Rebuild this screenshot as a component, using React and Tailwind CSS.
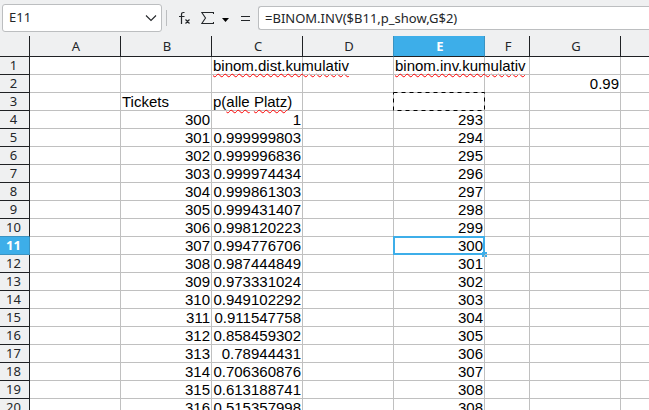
const columns = ['A', 'B', 'C', 'D', 'E', 'F', 'G'];
const ACTIVE_COL = 'E';
const ACTIVE_ROW = 11;

const probabilities = [
    '1', '0.999999803', '0.999996836', '0.999974434', '0.999861303', '0.999431407',
    '0.998120223', '0.994776706', '0.987444849', '0.973331024', '0.949102292', '0.911547758',
    '0.858459302', '0.78944431', '0.706360876', '0.613188741', '0.515357998',
];

const inverse = [293, 294, 295, 296, 297, 298, 299, 300, 301, 302, 303, 304, 305, 306, 307, 308, 308];

const Misspelled = ({ children }) => (
    <span className="underline decoration-[#f00] decoration-wavy decoration-1 underline-offset-2 [text-decoration-skip-ink:none]">{children}</span>
);

const cells = {
    C1: { text: <Misspelled>binom.dist.kumulativ</Misspelled> },
    E1: { text: <Misspelled>binom.inv.kumulativ</Misspelled> },
    G2: { text: '0.99', number: true },
    B3: { text: 'Tickets' },
    C3: { text: <>p(<Misspelled>alle</Misspelled> <Misspelled>Platz</Misspelled>)</> },
};

probabilities.forEach((p, i) => {
    cells[`B${i + 4}`] = { text: 300 + i, number: true };
    cells[`C${i + 4}`] = { text: p, number: true };
    cells[`E${i + 4}`] = { text: inverse[i], number: true };
});

function Toolbar() {
    return (
        <div className="flex h-9 shrink-0 items-center pl-[2px]">
            <div className="flex h-7 w-40 shrink-0 items-center rounded-[3px] border border-[#bcbec0] bg-white">
                <input
                    aria-label="Name Box"
                    defaultValue="E11"
                    className="min-w-0 flex-1 bg-transparent pl-[6px] text-[13px] outline-none"
                />
                <button type="button" aria-label="Open name list" className="flex h-full w-5 items-center justify-center">
                    <svg width="12" height="8" viewBox="0 0 12 8" fill="none" stroke="currentColor" strokeWidth="1.1">
                        <path d="M1 1.500L6 6.500L11 1.500" />
                    </svg>
                </button>
            </div>
            <div className="ml-1 h-4 w-px bg-[#bcbec0]" />
            <button type="button" aria-label="Function Wizard" className="ml-3 flex h-6 w-3 items-center">
                <svg width="12" height="14" viewBox="0 0 12 14" fill="none" stroke="currentColor" strokeWidth="1.2">
                    <path d="M5.500 1.500H4.500Q2.500 1.500 2.500 3.500V13M0 5.500H5.500M6.500 8.500L10.500 12.500M10.500 8.500L6.500 12.500" />
                </svg>
            </button>
            <button type="button" aria-label="Select Function" className="ml-[10px] flex h-6 items-center gap-2">
                <svg width="13" height="14" viewBox="0 0 13 14" fill="none" stroke="currentColor" strokeWidth="1.1">
                    <path d="M12.500 3V1.500H.8L4.500 7L.8 12.500H12.500V11" />
                </svg>
                <svg className="mt-1" width="7" height="4" viewBox="0 0 7 4">
                    <path d="M0 0H7L3.500 4Z" fill="#000" />
                </svg>
            </button>
            <button type="button" aria-label="Formula" className="ml-3 flex h-6 items-center">
                <svg width="9" height="5" viewBox="0 0 9 5" stroke="currentColor">
                    <path d="M0 .5H9M0 4.500H9" />
                </svg>
            </button>
            <input
                aria-label="Input line"
                defaultValue="=BINOM.INV($B11,p_show,G$2)"
                className="ml-2 h-6 min-w-0 flex-1 rounded-l-[3px] border border-r-0 border-[#bcbec0] bg-white pl-[6px] text-[13px] outline-none"
            />
        </div>
    );
}

function ColumnHeader({ name, next }) {
    let look = 'border-r-[#1f2124] font-normal';
    if (name === ACTIVE_COL) look = 'border-r-[#3a93c2] bg-[#3daee9] font-bold text-white';
    else if (next === ACTIVE_COL) look = 'border-r-[#3a93c2] font-normal';

    return (
        <th scope="col" className={`h-[21px] border-r border-b border-b-[#1f2124] p-0 pl-[2px] text-center text-[13px] leading-5 ${look}`}>
            {name}
        </th>
    );
}

function RowHeader({ row }) {
    let look = 'border-r-[#1f2124] border-b-[#1f2124] bg-[#eff0f1] font-normal text-[#232629]';
    if (row === ACTIVE_ROW) look = 'border-r-[#3a93c2] border-b-[#3a93c2] bg-[#3daee9] font-bold text-white';
    else if (row === ACTIVE_ROW - 1) look = 'border-r-[#1f2124] border-b-[#3a93c2] bg-[#eff0f1] font-normal text-[#232629]';

    return (
        <th scope="row" className={`h-[18px] border-r border-b p-0 pr-[2px] text-center font-['Noto_Sans',sans-serif] text-[13px] leading-[17px] ${look}`}>
            {row}
        </th>
    );
}

function Cell({ id }) {
    const cell = cells[id];
    return (
        <td className={`relative h-[18px] border-r border-b border-[#c0c0c0] px-px py-0 leading-[17px] whitespace-nowrap ${cell?.number ? 'text-right' : 'text-left'}`}>
            {cell?.text}
            {id === 'E3' && (
                <svg className="absolute -top-px -left-px h-[19px] w-[92px]" fill="none" stroke="#000" strokeDasharray="4 4">
                    <rect x="0.500" y="0.500" width="91" height="18" />
                </svg>
            )}
            {id === 'E11' && (
                <div className="absolute -inset-px border-2 border-[#3daee9]">
                    <div className="absolute -right-1 -bottom-1 size-[5px] bg-[#3daee9]" />
                </div>
            )}
        </td>
    );
}

export default function App() {
    const rows = Array.from({ length: 20 }, (_, i) => i + 1);

    return (
        <div className="flex h-screen flex-col overflow-hidden bg-[#eff0f1] font-['Noto_Sans',sans-serif] text-[#232629]">
            <Toolbar />
            <table className="w-full table-fixed border-separate border-spacing-0">
                <colgroup>
                    <col className="w-[30px]" />
                    {columns.map((c) => (
                        <col key={c} className={c === 'F' ? 'w-[45px]' : 'w-[91px]'} />
                    ))}
                    <col />
                </colgroup>
                <thead>
                    <tr>
                        <td className="border-r border-b border-[#1f2124]" />
                        {columns.map((c, i) => (
                            <ColumnHeader key={c} name={c} next={columns[i + 1]} />
                        ))}
                        <td className="border-b border-[#1f2124]" />
                    </tr>
                </thead>
                <tbody className="bg-white font-['Liberation_Sans',Arial,sans-serif] text-[15px] text-black">
                    {rows.map((row) => (
                        <tr key={row}>
                            <RowHeader row={row} />
                            {columns.map((c) => (
                                <Cell key={c} id={`${c}${row}`} />
                            ))}
                            <td className="border-b border-[#c0c0c0]" />
                        </tr>
                    ))}
                </tbody>
            </table>
        </div>
    );
}
